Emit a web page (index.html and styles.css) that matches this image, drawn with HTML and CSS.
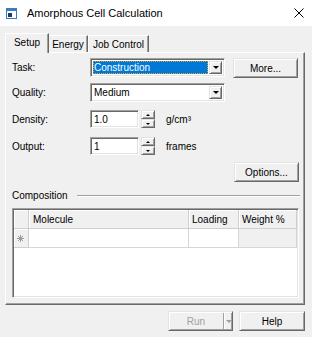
FILE: index.html
```html
<!DOCTYPE html>
<html lang="en">
<head>
    <meta charset="UTF-8">
    <title>Amorphous Cell Calculation</title>
    <link rel="stylesheet" href="styles.css">
</head>
<body>
    <div class="window">
        <div class="titlebar">
            <svg class="app-icon" viewBox="0 0 11 11">
                <rect x="0" y="0" width="11" height="11" fill="#3a7cc0"/>
                <rect x="1" y="3" width="9" height="7" fill="#fff"/>
                <rect x="2" y="5" width="4" height="4" fill="#1d3b66"/>
            </svg>
            <span class="title">Amorphous Cell Calculation</span>
            <svg class="close" viewBox="0 0 10 10">
                <path d="M0.5 0.5 L9.5 9.5 M9.5 0.5 L0.5 9.5" stroke="#000" stroke-width="1" fill="none"/>
            </svg>
        </div>
        <div class="client">
            <div class="tabs">
                <div class="tab active">Setup</div>
                <div class="tab tab-energy">Energy</div>
                <div class="tab tab-job">Job Control</div>
            </div>
            <div class="panel">
                <div class="row row-task">
                    <span class="lbl">Task:</span>
                    <div class="combo">
                        <span class="combo-text"><span class="selected">Construction</span></span>
                        <span class="drop"></span>
                    </div>
                    <button class="btn btn-more">More...</button>
                </div>
                <div class="row row-quality">
                    <span class="lbl">Quality:</span>
                    <div class="combo">
                        <span class="combo-text">Medium</span>
                        <span class="drop"></span>
                    </div>
                </div>
                <div class="row row-density">
                    <span class="lbl">Density:</span>
                    <div class="textbox">1.0</div>
                    <div class="spin">
                        <span class="spin-btn up"></span>
                        <span class="spin-btn down"></span>
                    </div>
                    <span class="unit">g/cm³</span>
                </div>
                <div class="row row-output">
                    <span class="lbl">Output:</span>
                    <div class="textbox">1</div>
                    <div class="spin">
                        <span class="spin-btn up"></span>
                        <span class="spin-btn down"></span>
                    </div>
                    <span class="unit">frames</span>
                </div>
                <div class="row row-options">
                    <button class="btn btn-options">Options...</button>
                </div>
                <div class="group-head">
                    <span>Composition</span>
                    <span class="etched"></span>
                </div>
                <div class="grid">
                    <div class="grid-row head">
                        <div class="cell c-rh"></div>
                        <div class="cell c-mol">Molecule</div>
                        <div class="cell c-load">Loading</div>
                        <div class="cell c-wt">Weight %</div>
                    </div>
                    <div class="grid-row">
                        <div class="cell c-rh">
                            <svg class="newrow" viewBox="0 0 7 7">
                                <path d="M3.5 0 V7 M0 3.5 H7 M1 1 L6 6 M6 1 L1 6" stroke="#9a9a9a" stroke-width="1" fill="none"/>
                            </svg>
                        </div>
                        <div class="cell c-mol"></div>
                        <div class="cell c-load"></div>
                        <div class="cell c-wt readonly"></div>
                    </div>
                </div>
            </div>
            <div class="footer">
                <div class="btn split disabled">
                    <span class="split-main">Run</span>
                    <span class="split-arrow"></span>
                </div>
                <button class="btn btn-help">Help</button>
            </div>
        </div>
    </div>
</body>
</html>
```

FILE: styles.css
```css
* {
    box-sizing: border-box;
}
body {
    margin: 0;
    background-color: #f0f0f0;
    font-family: "Liberation Sans", Arial, sans-serif;
    font-size: 10px;
    color: #000;
}
.window {
    width: 312px;
    height: 337px;
    display: flex;
    flex-direction: column;
}
.titlebar {
    height: 26px;
    background-color: #fff;
    display: flex;
    align-items: center;
    padding: 0 8px 0 6px;
}
.app-icon {
    width: 11px;
    height: 11px;
    margin-right: 10px;
}
.title {
    flex: 1;
    font-size: 11px;
}
.close {
    width: 10px;
    height: 10px;
}
.client {
    padding: 7px 7px 0 5px;
}

/* tabs */
.tabs {
    display: flex;
    align-items: flex-end;
    height: 20px;
    margin-bottom: -1px;
    position: relative;
    z-index: 1;
}
.tab {
    height: 17px;
    margin-bottom: 1px;
    display: flex;
    align-items: center;
    justify-content: center;
    border-top: 1px solid #fff;
    border-left: 1px solid #fff;
    border-right: 1px solid #696969;
    box-shadow: inset -1px 0 0 #a0a0a0;
    background-color: #f0f0f0;
}
.tab.active {
    width: 44px;
    height: 20px;
    margin-bottom: 0;
    padding-bottom: 2px;
}
.tab-energy {
    width: 39px;
    border-left: none;
}
.tab-job {
    width: 61px;
}

/* panel */
.panel {
    width: 300px;
    height: 253px;
    border-top: 1px solid #fff;
    border-left: 1px solid #fff;
    border-right: 1px solid #696969;
    border-bottom: 1px solid #696969;
    box-shadow: inset -1px -1px 0 #a0a0a0;
    padding: 5px 5px 0 6px;
}
.row {
    display: flex;
    align-items: center;
}
.row-task {
    align-items: flex-start;
    height: 20px;
}
.row-task .lbl {
    line-height: 19px;
}
.row-quality {
    margin-top: 5px;
}
.row-density {
    margin-top: 8px;
}
.row-output {
    margin-top: 9px;
}
.row-options {
    margin-top: 7px;
    justify-content: flex-end;
}
.lbl {
    width: 78px;
}
.unit {
    margin-left: 11px;
}

/* combo */
.combo {
    display: flex;
    width: 135px;
    height: 19px;
    padding: 2px;
    background-color: #fff;
    border: 1px solid;
    border-color: #a0a0a0 #fff #fff #a0a0a0;
    box-shadow: inset 1px 1px 0 #696969, inset -1px -1px 0 #e3e3e3;
}
.combo-text {
    flex: 1;
    display: flex;
    align-items: center;
    padding-left: 1px;
    margin-right: 1px;
}
.selected {
    flex: 1;
    align-self: stretch;
    display: flex;
    align-items: center;
    margin-left: -1px;
    padding-left: 1px;
    background-color: #0078d7;
    color: #fff;
    outline: 1px dotted #e8a317;
    outline-offset: -1px;
}
.drop {
    width: 13px;
    position: relative;
    background-color: #f0f0f0;
    border: 1px solid;
    border-color: #e3e3e3 #696969 #696969 #e3e3e3;
    box-shadow: inset 1px 1px 0 #fff, inset -1px -1px 0 #a0a0a0;
}
.drop::after {
    content: '';
    position: absolute;
    left: 3px;
    top: 4px;
    border-left: 3px solid transparent;
    border-right: 3px solid transparent;
    border-top: 3px solid #000;
}

/* text box + spinner */
.textbox {
    width: 49px;
    height: 18px;
    padding: 0 3px;
    display: flex;
    align-items: center;
    background-color: #fff;
    border: 1px solid;
    border-color: #a0a0a0 #fff #fff #a0a0a0;
    box-shadow: inset 1px 1px 0 #696969, inset -1px -1px 0 #e3e3e3;
}
.spin {
    width: 14px;
    height: 18px;
    margin-left: 2px;
    display: flex;
    flex-direction: column;
}
.spin-btn {
    flex: 1;
    position: relative;
    background-color: #f0f0f0;
    border: 1px solid;
    border-color: #e3e3e3 #696969 #696969 #e3e3e3;
    box-shadow: inset 1px 1px 0 #fff, inset -1px -1px 0 #a0a0a0;
}
.spin-btn::after {
    content: '';
    position: absolute;
    left: 4px;
    border-left: 2px solid transparent;
    border-right: 2px solid transparent;
}
.spin-btn.up::after {
    top: 3px;
    border-bottom: 2px solid #000;
}
.spin-btn.down::after {
    top: 3px;
    border-top: 2px solid #000;
}

/* buttons */
.btn {
    height: 20px;
    padding: 0;
    font-family: inherit;
    font-size: inherit;
    color: #000;
    background-color: #f0f0f0;
    border: 1px solid;
    border-color: #e3e3e3 #696969 #696969 #e3e3e3;
    box-shadow: inset 1px 1px 0 #fff, inset -1px -1px 0 #a0a0a0;
    display: flex;
    align-items: center;
    justify-content: center;
}
.btn-more {
    width: 65px;
    margin-left: 8px;
}
.btn-options {
    width: 65px;
}

/* composition group */
.group-head {
    display: flex;
    align-items: center;
    margin-top: 8px;
    height: 11px;
}
.etched {
    flex: 1;
    height: 2px;
    margin-left: 9px;
    margin-right: -1px;
    border-top: 1px solid #a0a0a0;
    border-bottom: 1px solid #fff;
}

/* data grid */
.grid {
    margin-top: 7px;
    height: 90px;
    background-color: #fff;
    border: 1px solid;
    border-color: #a0a0a0 #fff #fff #a0a0a0;
    box-shadow: inset 1px 1px 0 #696969, inset -1px -1px 0 #e3e3e3;
    padding: 1px 1px 0 1px;
}
.grid-row {
    display: flex;
    height: 19px;
}
.cell {
    height: 19px;
    display: flex;
    align-items: center;
    padding-left: 3px;
    border-right: 1px solid #d6d6d6;
    border-bottom: 1px solid #d6d6d6;
}
.head .cell {
    background-color: #f0f0f0;
    border-right-color: #cfcfcf;
    border-bottom-color: #cfcfcf;
    box-shadow: inset 1px 1px 0 #fff;
}
.c-rh {
    width: 15px;
    background-color: #f0f0f0;
    box-shadow: inset 1px 1px 0 #fff;
    border-right-color: #cfcfcf;
    border-bottom-color: #cfcfcf;
}
.c-mol {
    width: 160px;
    padding-left: 4px;
}
.c-load {
    width: 50px;
}
.c-wt {
    width: 58px;
}
.readonly {
    background-color: #f0f0f0;
}
.newrow {
    width: 7px;
    height: 7px;
}

/* footer */
.footer {
    display: flex;
    justify-content: flex-end;
    margin-top: 6px;
}
.split {
    width: 65px;
    justify-content: flex-start;
}
.split-main {
    width: 54px;
    text-align: center;
    color: #a0a0a0;
}
.split-arrow {
    flex: 1;
    align-self: stretch;
    position: relative;
    border-left: 1px solid #a0a0a0;
    box-shadow: inset 1px 0 0 #fff;
    margin: 1px 0;
}
.split-arrow::after {
    content: '';
    position: absolute;
    left: 2px;
    top: 7px;
    border-left: 3px solid transparent;
    border-right: 3px solid transparent;
    border-top: 3px solid #a0a0a0;
}
.btn-help {
    width: 66px;
    margin-left: 6px;
}
```
